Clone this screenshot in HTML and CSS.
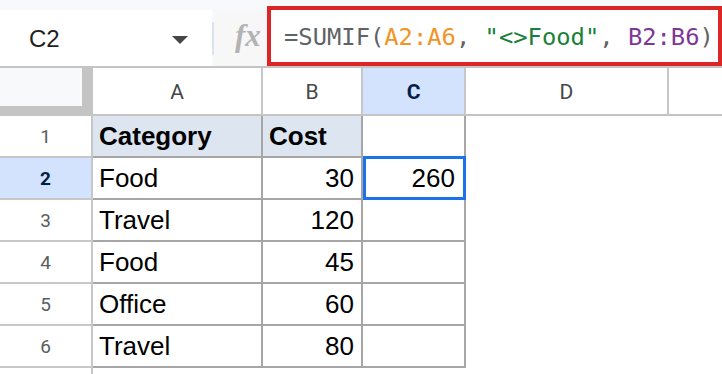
FILE: index.html
```html
<!DOCTYPE html>
<html lang="en">
<head>
<meta charset="utf-8">
<title>SUMIF</title>
<link rel="stylesheet" href="styles.css">
</head>
<body>
<div class="app">
  <div class="bar">
    <div class="namebox"><span class="ref">C2</span><span class="caret"></span></div>
    <div class="sep"></div>
    <div class="fx">fx</div>
    <div class="formula"><span class="f-op">=SUMIF(</span><span class="f-r1">A2:A6</span><span class="f-op">, </span><span class="f-str">"&lt;&gt;Food"</span><span class="f-op">, </span><span class="f-r2">B2:B6</span><span class="f-op">)</span></div>
  </div>
  <div class="sheet">
    <div class="corner"><div class="corner-in"></div></div>
    <div class="ch">A</div>
    <div class="ch">B</div>
    <div class="ch ch-sel">C</div>
    <div class="ch">D</div>
    <div class="ch ch-last"></div>

    <div class="rh">1</div>
    <div class="c hd">Category</div>
    <div class="c hd">Cost</div>
    <div class="c"></div>
    <div class="e"></div><div class="e"></div>

    <div class="rh rh-sel">2</div>
    <div class="c">Food</div>
    <div class="c num">30</div>
    <div class="c num sel">260</div>
    <div class="e"></div><div class="e"></div>

    <div class="rh">3</div>
    <div class="c">Travel</div>
    <div class="c num">120</div>
    <div class="c"></div>
    <div class="e"></div><div class="e"></div>

    <div class="rh">4</div>
    <div class="c">Food</div>
    <div class="c num">45</div>
    <div class="c"></div>
    <div class="e"></div><div class="e"></div>

    <div class="rh">5</div>
    <div class="c">Office</div>
    <div class="c num">60</div>
    <div class="c"></div>
    <div class="e"></div><div class="e"></div>

    <div class="rh">6</div>
    <div class="c">Travel</div>
    <div class="c num">80</div>
    <div class="c"></div>
    <div class="e"></div><div class="e"></div>

    <div class="rh rh-last"></div>
  </div>
</div>
</body>
</html>
```

FILE: styles.css
```css
* { box-sizing: border-box; }
html, body { margin: 0; padding: 0; background: #ffffff; }
body { width: 722px; height: 374px; overflow: hidden; }

.app { width: 722px; }

.bar {
  display: flex;
  height: 66px;
  padding-top: 6px;
  background: #f8f9fc;
}
.namebox {
  width: 212px;
  margin-top: 4px;
  background: #ffffff;
  display: flex;
  align-items: center;
  padding-left: 29px;
  padding-right: 24px;
  justify-content: space-between;
}
.ref {
  font-family: "Liberation Sans", Arial, sans-serif;
  font-size: 24px;
  color: #1f1f1f;
  line-height: 1;
  padding-top: 2px;
}
.caret {
  width: 0; height: 0;
  border-left: 8px solid transparent;
  border-right: 8px solid transparent;
  border-top: 8px solid #444746;
  margin-top: 3px;
}
.sep {
  width: 2px;
  margin-top: 16px;
  margin-bottom: 11px;
  background: #d9e3f1;
}
.fx {
  width: 53px;
  margin-top: 4px;
  background: #f7f7f7;
  font-family: "Liberation Serif", "Times New Roman", serif;
  font-style: italic;
  font-weight: bold;
  font-size: 31px;
  color: #b3b3b3;
  display: flex;
  align-items: center;
  padding-left: 21px;
  padding-bottom: 4px;
}
.formula {
  flex: 1;
  height: 60px;
  border: 4px solid #dc2626;
  background: #ffffff;
  display: flex;
  align-items: center;
  padding-left: 13px;
  padding-top: 2px;
  font-family: "DejaVu Sans Mono", monospace;
  font-size: 23.8px;
  white-space: pre;
  overflow: hidden;
}
.f-op { color: #5f6368; }
.f-r1 { color: #f29425; }
.f-str { color: #188038; }
.f-r2 { color: #7e3794; }

.sheet {
  display: grid;
  grid-template-columns: 93px 170px 100px 103px 203px 1fr;
  grid-template-rows: 48px repeat(6, 42px) 6px;
  border-top: 2px solid #c4c4c4;
}

.corner {
  background: #c4c4c4;
}
.corner-in {
  width: 82px;
  height: 38px;
  background: #f8f9fa;
}

.ch {
  border-right: 2px solid #c7c7c7;
  border-bottom: 2px solid #c4c4c4;
  display: flex;
  align-items: center;
  justify-content: center;
  font-family: Roboto, "Liberation Sans", sans-serif;
  font-size: 21px;
  color: #444746;
  padding-top: 2px;
}
.ch-sel {
  background: #d3e3fd;
  color: #041e49;
  font-weight: bold;
}
.ch-last { border-right: none; }

.rh {
  border-right: 2px solid #c7c7c7;
  border-bottom: 2px solid #c7c7c7;
  display: flex;
  align-items: center;
  justify-content: center;
  font-family: Roboto, "Liberation Sans", sans-serif;
  font-size: 19px;
  color: #5a5d61;
}
.rh-sel {
  background: #d3e3fd;
  color: #041e49;
  font-weight: bold;
}
.rh-last { border-bottom: none; }

.c {
  border-right: 2px solid #a6a6a6;
  border-bottom: 2px solid #a6a6a6;
  display: flex;
  align-items: flex-end;
  padding: 0 6px 5px 6px;
  font-family: "Liberation Sans", Arial, sans-serif;
  font-size: 26px;
  line-height: 30px;
  color: #000000;
}
.c.hd {
  background: #dde6f0;
  font-weight: bold;
}
.c.num {
  justify-content: flex-end;
  padding-right: 7px;
}
.c.sel {
  position: relative;
  padding-right: 9px;
}
.c.sel::after {
  content: "";
  position: absolute;
  top: -2px;
  left: 0;
  right: -2px;
  bottom: -2px;
  border: 3px solid #1a73e8;
}
.e { background: #ffffff; }
```
